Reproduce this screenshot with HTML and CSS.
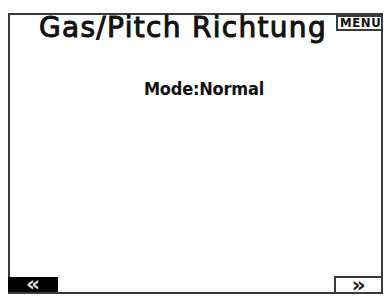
FILE: index.html
```html
<!DOCTYPE html>
<html>
<head>
<meta charset="utf-8">
<link rel="stylesheet" href="styles.css">
</head>
<body>
<div class="screen">
  <div class="header">
    <div class="title">Gas/Pitch Richtung</div>
    <div class="menu"><span class="menu-text">MENU</span></div>
  </div>
  <div class="content">
    <div class="mode">Mode:Normal</div>
  </div>
  <div class="footer">
    <div class="btn back">&laquo;</div>
    <div class="btn next">&raquo;</div>
  </div>
</div>
</body>
</html>
```
FILE: styles.css
```css
html, body {
  margin: 0;
  padding: 0;
  background: #fff;
}
.screen {
  box-sizing: border-box;
  margin: 13px 0 0 8px;
  width: 375px;
  height: 281px;
  border: 2px solid #3a3a3a;
  display: flex;
  flex-direction: column;
  font-family: "DejaVu Sans", sans-serif;
  color: #111;
}
.header {
  display: flex;
  align-items: flex-start;
  height: 44px;
}
.title {
  flex: 1;
  font-size: 28px;
  line-height: 24px;
  padding-left: 29px;
  padding-top: 1px;
  letter-spacing: 1.3px;
  white-space: nowrap;
  -webkit-text-stroke: 1px #111;
}
.menu {
  box-sizing: border-box;
  width: 47px;
  height: 16px;
  margin-right: -2px;
  border: 2px solid #3a3a3a;
  padding-left: 2px;
  font-family: "DejaVu Sans Condensed", "DejaVu Sans", sans-serif;
  font-weight: bold;
  font-size: 13px;
  line-height: 12px;
  letter-spacing: 0.6px;
  white-space: nowrap;
  overflow: hidden;
}
.content {
  flex: 1;
  display: flex;
  justify-content: center;
  padding-left: 17px;
}
.mode {
  margin-top: 20px;
  font-family: "DejaVu Sans Condensed", "DejaVu Sans", sans-serif;
  font-weight: bold;
  font-size: 18px;
  line-height: 20px;
  letter-spacing: -0.2px;
}
.footer {
  display: flex;
  justify-content: space-between;
  align-items: flex-end;
}
.btn {
  box-sizing: border-box;
  height: 16px;
  font-size: 22px;
  line-height: 13px;
  text-align: center;
  font-weight: bold;
}
.back {
  width: 50px;
  background: #000;
  color: #ddd;
  margin-left: -2px;
  height: 15px;
}
.next {
  width: 47px;
  border: 2px solid #3a3a3a;
  border-bottom: none;
  border-right: none;
  color: #222;
}
```
